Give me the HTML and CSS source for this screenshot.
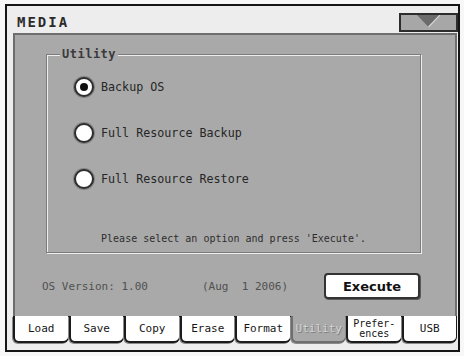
FILE: index.html
```html
<!DOCTYPE html>
<html lang="en">
<head>
    <meta charset="UTF-8">
    <meta name="viewport" content="width=device-width, initial-scale=1.0">
    <title>Media - Utility</title>
    <link rel="stylesheet" href="styles.css">
</head>
<body>
    <div class="screen">
        <div class="header">
            <h1 class="title">MEDIA</h1>
            <button type="button" class="menu-btn">
                <svg width="23" height="12" viewBox="0 0 23 12">
                    <polygon points="0,0 23,0 11.5,12" fill="#6b6b6b"/>
                    <polyline points="23,0 11.5,12" fill="none" stroke="#d8d8d8" stroke-width="1.2"/>
                </svg>
            </button>
        </div>

        <div class="panel">
            <fieldset class="group">
                <legend>Utility</legend>
                <div class="group-body">
                    <label class="option">
                        <span class="radio checked"></span>
                        <span>Backup OS</span>
                    </label>
                    <label class="option">
                        <span class="radio"></span>
                        <span>Full Resource Backup</span>
                    </label>
                    <label class="option">
                        <span class="radio"></span>
                        <span>Full Resource Restore</span>
                    </label>
                    <p class="hint">Please select an option and press 'Execute'.</p>
                </div>
            </fieldset>

            <div class="status">
                <span class="version">OS Version: 1.00</span>
                <span class="date">(Aug&nbsp;&nbsp;1 2006)</span>
                <button type="button" class="execute-btn">Execute</button>
            </div>
        </div>

        <div class="tabs">
            <div class="tab">Load</div>
            <div class="tab">Save</div>
            <div class="tab">Copy</div>
            <div class="tab">Erase</div>
            <div class="tab">Format</div>
            <div class="tab active">Utility</div>
            <div class="tab two-line">Prefer-<br>ences</div>
            <div class="tab">USB</div>
        </div>
    </div>
</body>
</html>
```

FILE: styles.css
```css
* {
    margin: 0;
    padding: 0;
    box-sizing: border-box;
}

body {
    background: #f7f7f7;
    padding: 4px 0 0 5px;
    font-family: "DejaVu Sans Mono", "Liberation Mono", monospace;
    color: #222;
}

.screen {
    width: 455px;
    height: 348px;
    border: 2px solid #151515;
    background: #ededed;
    display: flex;
    flex-direction: column;
}

/* Header */
.header {
    height: 27px;
    flex-shrink: 0;
    display: flex;
    justify-content: space-between;
    align-items: flex-start;
    padding-left: 10px;
}

.title {
    font-size: 14px;
    font-weight: bold;
    letter-spacing: 2px;
    line-height: 14px;
    margin-top: 9px;
    color: #2a2a2a;
}

.menu-btn {
    width: 59px;
    height: 19px;
    margin-top: 7px;
    border: 2px solid #2c2c2c;
    background: #a7a7a7;
    display: flex;
    justify-content: center;
    align-items: flex-start;
    cursor: pointer;
}

/* Main panel */
.panel {
    flex: 1;
    margin: 0 1px 0 6px;
    background: #a9a9a9;
    border: 2px solid #6e6e6e;
    border-bottom: none;
    display: flex;
    flex-direction: column;
}

.group {
    margin: 12px 34px 0 31px;
    border: 1px solid #7c7c7c;
    box-shadow: inset 1px 1px 0 #eeeeee, 1px 1px 0 #eeeeee;
}

.group legend {
    margin-left: 13px;
    padding: 0 2px;
    background: #a9a9a9;
    font-size: 12px;
    font-weight: bold;
    letter-spacing: 0.5px;
    line-height: 14px;
    color: #3a3a3a;
}

.group-body {
    height: 191px;
    display: flex;
    flex-direction: column;
    padding: 16px 0 6px 27px;
}

.option {
    display: flex;
    align-items: center;
    gap: 7px;
    height: 20px;
    margin-bottom: 26px;
    font-size: 11.7px;
    color: #262626;
    cursor: pointer;
}

.radio {
    width: 20px;
    height: 20px;
    border-radius: 50%;
    border: 2px solid #2e2e2e;
    background: #fff;
    box-shadow: 0 0 0 1px rgba(60, 60, 60, 0.35);
    display: flex;
    align-items: center;
    justify-content: center;
}

.radio.checked::after {
    content: "";
    width: 8px;
    height: 8px;
    border-radius: 50%;
    background: #111;
}

.hint {
    margin-top: auto;
    margin-left: -27px;
    text-align: center;
    font-size: 10px;
    line-height: 14px;
    color: #2e2e2e;
}

/* Status row */
.status {
    display: flex;
    align-items: center;
    height: 26px;
    margin-top: 20px;
    padding: 0 35px 0 27px;
    font-size: 11px;
    color: #505050;
}

.date {
    margin-left: 54px;
}

.execute-btn {
    margin-left: auto;
    width: 96px;
    height: 26px;
    border: 2px solid #333;
    border-radius: 4px;
    background: #fff;
    box-shadow: 1px 1px 0 #5a5a5a;
    font-family: "DejaVu Sans", sans-serif;
    font-size: 13px;
    font-weight: bold;
    color: #111;
    cursor: pointer;
}

/* Tabs */
.tabs {
    display: flex;
    height: 27px;
    flex-shrink: 0;
    margin: 0 1px 7px 6px;
}

.tab {
    flex: 1;
    display: flex;
    align-items: center;
    justify-content: center;
    background: #fff;
    border: 2px solid #1b1b1b;
    border-top: none;
    border-right-width: 1px;
    border-radius: 0 0 6px 6px;
    box-shadow: -1px 1px 0 #8a8a8a;
    font-size: 11px;
    color: #161616;
    cursor: pointer;
}

.tab.active {
    background: #a9a9a9;
    border-color: #6e6e6e;
    color: #d4d4d4;
    text-shadow: 1px 1px 0 #7e7e7e;
}

.tab.two-line {
    font-size: 10px;
    line-height: 10px;
    text-align: center;
}
```
